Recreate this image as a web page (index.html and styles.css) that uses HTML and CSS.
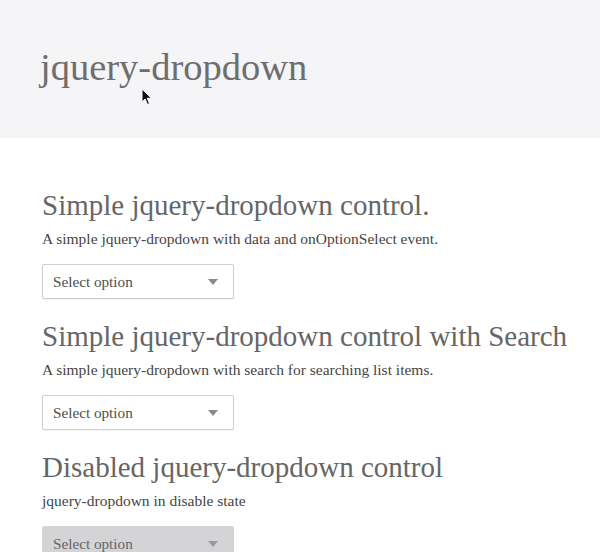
FILE: index.html
```html
<!DOCTYPE html>
<html>
<head>
<meta charset="utf-8">
<link rel="stylesheet" href="styles.css">
</head>
<body>
<header class="hero">
  <h1 class="hero-title">jquery-dropdown</h1>
  <svg class="cursor" width="12" height="18" viewBox="0 0 12 18"><path d="M1 1 L1 14 L4 11 L6.5 16.5 L8.5 15.6 L6.2 10.3 L10.5 10.3 Z" fill="#111" stroke="#fff" stroke-width="1"/></svg>
</header>
<main class="content">
  <section class="demo">
    <h2 class="demo-title">Simple jquery-dropdown control.</h2>
    <p class="demo-desc">A simple jquery-dropdown with data and onOptionSelect event.</p>
    <div class="dropdown"><span class="dropdown-label">Select option</span><span class="caret"></span></div>
  </section>
  <section class="demo">
    <h2 class="demo-title">Simple jquery-dropdown control with Search</h2>
    <p class="demo-desc">A simple jquery-dropdown with search for searching list items.</p>
    <div class="dropdown"><span class="dropdown-label">Select option</span><span class="caret"></span></div>
  </section>
  <section class="demo">
    <h2 class="demo-title">Disabled jquery-dropdown control</h2>
    <p class="demo-desc">jquery-dropdown in disable state</p>
    <div class="dropdown dropdown-disabled"><span class="dropdown-label">Select option</span><span class="caret"></span></div>
  </section>
</main>
</body>
</html>
```
FILE: styles.css
```css
html, body {
  margin: 0;
  padding: 0;
  background: #ffffff;
  font-family: "Liberation Serif", "Times New Roman", serif;
  overflow: hidden;
}
.hero {
  position: relative;
  height: 138px;
  box-sizing: border-box;
  padding: 47px 0 0 40px;
  background: #f5f4f7;
}
.hero-title {
  margin: 0;
  font-size: 38.5px;
  line-height: 40px;
  font-weight: normal;
  color: #6e6e6e;
}
.cursor {
  position: absolute;
  left: 141px;
  top: 88px;
}
.content {
  padding: 51px 0 0 42px;
}
.demo {
  margin-bottom: 21px;
}
.demo-title {
  margin: 0;
  font-size: 29px;
  line-height: 32px;
  font-weight: normal;
  color: #666666;
}
.demo-desc {
  margin: 9px 0 16px;
  font-size: 15.5px;
  line-height: 18px;
  color: #454545;
}
.dropdown {
  width: 192px;
  height: 35px;
  box-sizing: border-box;
  border: 1px solid #cfcfcf;
  border-radius: 2px;
  background: #ffffff;
  display: flex;
  align-items: center;
  justify-content: space-between;
  padding: 0 15px 0 10px;
  box-shadow: 0 1px 1px rgba(0,0,0,0.05);
}
.dropdown-label {
  font-size: 15.2px;
  color: #4e4e4e;
  line-height: 18px;
}
.caret {
  width: 0;
  height: 0;
  border-left: 5.5px solid transparent;
  border-right: 5.5px solid transparent;
  border-top: 6px solid #8a8a8a;
}
.dropdown-disabled {
  background: #d4d3d6;
  border-color: #d4d3d6;
  box-shadow: none;
}
.dropdown-disabled .dropdown-label {
  color: #666666;
}
.dropdown-disabled .caret {
  border-top-color: #9a9a9c;
}
```
